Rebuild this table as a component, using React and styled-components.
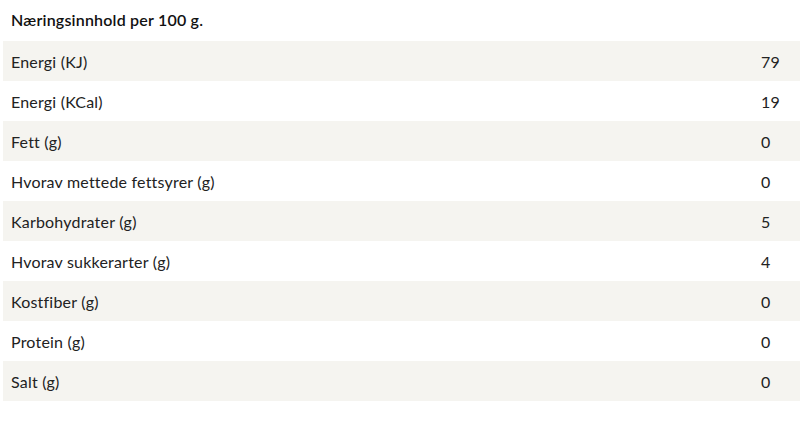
import React from 'react'
import styled, { createGlobalStyle } from 'styled-components'

const rows = [
  ['Energi (KJ)', '79'],
  ['Energi (KCal)', '19'],
  ['Fett (g)', '0'],
  ['Hvorav mettede fettsyrer (g)', '0'],
  ['Karbohydrater (g)', '5'],
  ['Hvorav sukkerarter (g)', '4'],
  ['Kostfiber (g)', '0'],
  ['Protein (g)', '0'],
  ['Salt (g)', '0'],
]

const Global = createGlobalStyle`
  *, *::before, *::after { box-sizing: border-box; }
  body {
    margin: 0;
    background: #fff;
    font-family: Lato, "Open Sans", sans-serif;
    color: #222;
  }
`

const Wrap = styled.div`
  padding: 0 3px;
`

const Title = styled.div`
  height: 41px;
  display: flex;
  align-items: center;
  padding: 0 8px 2px;
  font-size: 16px;
  font-weight: 600;
  letter-spacing: 0.2px;
  color: #111;
`

const Table = styled.div`
  width: 797px;
`

const Row = styled.div`
  display: grid;
  grid-template-columns: 1fr 40px;
  height: 40px;
  align-items: center;
  padding: 0 0 0 8px;
  font-size: 16px;
  letter-spacing: 0.2px;
  background: ${p => (p.$shaded ? '#f5f4f0' : '#fff')};
`

const Value = styled.span`
  padding-left: 1px;
`

export default function App () {
  return (
    <Wrap>
      <Global />
      <Title>Næringsinnhold per 100 g.</Title>
      <Table>
        {rows.map(([label, value], i) => (
          <Row key={label} $shaded={i % 2 === 0}>
            <span>{label}</span>
            <Value>{value}</Value>
          </Row>
        ))}
      </Table>
    </Wrap>
  )
}
